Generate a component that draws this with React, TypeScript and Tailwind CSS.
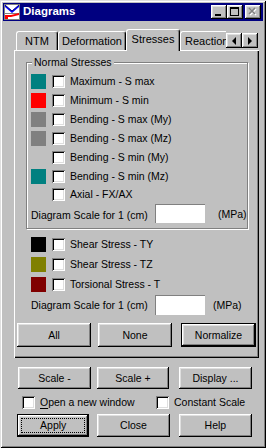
import React from 'react';

const raised =
  'bg-[#c0c0c0] shadow-[inset_-1px_-1px_#000,inset_1px_1px_#fff,inset_-2px_-2px_#808080,inset_2px_2px_#dfdfdf]';
const sunken =
  'bg-white shadow-[inset_1px_1px_#808080,inset_-1px_-1px_#fff,inset_2px_2px_#000,inset_-2px_-2px_#dfdfdf]';

function Check({ className = '' }: { className?: string }) {
  return <div className={`w-[13px] h-[13px] shrink-0 ${sunken} ${className}`} />;
}

interface BtnProps {
  label: React.ReactNode;
  size: string;
  isDefault?: boolean;
  focus?: boolean;
  className?: string;
}

function Btn({ label, size, isDefault, focus, className = '' }: BtnProps) {
  if (isDefault) {
    return (
      <div className={`${size} border border-black flex ${className}`}>
        <div className={`flex-1 flex ${raised}`}>
          {focus ? (
            <div className="flex-1 m-[3px] border border-dotted border-black flex items-center justify-center">
              {label}
            </div>
          ) : (
            <div className="flex-1 flex items-center justify-center">{label}</div>
          )}
        </div>
      </div>
    );
  }
  return (
    <div className={`${size} ${raised} flex items-center justify-center ${className}`}>{label}</div>
  );
}

function StressRow({ color, label, h = 'h-[19px]' }: { color?: string; label: string; h?: string }) {
  return (
    <div className={`flex items-center ${h}`}>
      {color ? <div className={`w-[15px] h-[15px] shrink-0 ${color}`} /> : <div className="w-[15px] shrink-0" />}
      <Check className="ml-[6px]" />
      <span className="ml-[5px] whitespace-nowrap">{label}</span>
    </div>
  );
}

function Tab({ label, size, selected }: { label: string; size: string; selected?: boolean }) {
  return (
    <div
      className={`${size} shrink-0 flex items-center justify-center border-l border-t border-white border-r border-r-black rounded-t-[3px] bg-[#c0c0c0] shadow-[inset_-1px_0_#808080] whitespace-nowrap ${
        selected ? 'relative z-10 -mb-[1px]' : ''
      }`}
    >
      {label}
    </div>
  );
}

function AppIcon() {
  return (
    <svg width="16" height="16" viewBox="0 0 16 16" className="shrink-0">
      <rect x="0" y="0" width="16" height="16" fill="#808080" />
      <rect x="1" y="1" width="14" height="14" fill="#fff" />
      <polygon points="1,1 8,7 15,1 15,3 8,9 1,3" fill="#0000ff" />
      <polyline points="1,1 8,7 15,1" fill="none" stroke="#000080" strokeWidth="1" />
      <rect x="1" y="9" width="14" height="1" fill="#808080" />
      <polygon points="1,15 1,11 7,11 15,9 15,11 7,13 4,13 4,15" fill="#ff0000" />
    </svg>
  );
}

function CaptionBtn({ children, className = '' }: { children: React.ReactNode; className?: string }) {
  return (
    <div className={`w-[16px] h-[14px] ${raised} ${className}`}>
      <svg width="16" height="14" viewBox="0 0 16 14">
        {children}
      </svg>
    </div>
  );
}

export default function App() {
  return (
    <div className="w-[266px] h-[448px] bg-[#c0c0c0] p-[3px] flex flex-col font-['Liberation_Sans',Arial,sans-serif] text-[10.5px] text-black leading-none shadow-[inset_1px_1px_#dfdfdf,inset_-1px_-1px_#000,inset_2px_2px_#fff,inset_-2px_-2px_#808080] select-none">
      {/* Title bar */}
      <div className="h-[18px] bg-[#000080] flex items-center pl-[1px] pr-[2px]">
        <AppIcon />
        <span className="ml-[3px] text-white font-bold text-[11.5px]">Diagrams</span>
        <div className="flex-1" />
        <CaptionBtn>
          <rect x="4" y="9" width="6" height="2" fill="#000" />
        </CaptionBtn>
        <CaptionBtn>
          <rect x="3.5" y="2.5" width="8" height="8" fill="none" stroke="#000" />
          <rect x="3" y="2" width="9" height="2" fill="#000" />
        </CaptionBtn>
        <CaptionBtn className="ml-[2px]">
          <path d="M5 4 L11 10 M11 4 L5 10" stroke="#fff" strokeWidth="1.6" />
          <path d="M4 3 L10 9 M10 3 L4 9" stroke="#808080" strokeWidth="1.6" />
        </CaptionBtn>
      </div>

      {/* Body */}
      <div className="flex flex-col px-[11px] pt-[8px]">
        {/* Tab strip */}
        <div className="h-[21px] flex items-end pl-[2px] text-[11px]">
          <Tab label="NTM" size="w-[42px] h-[19px]" />
          <Tab label="Deformation" size="w-[68px] h-[19px]" />
          <Tab label="Stresses" size="w-[54px] h-[22px] pb-[2px]" selected />
          <div className="w-[46px] h-[19px] overflow-hidden flex shrink-0">
            <Tab label="Reaction" size="w-[60px] h-[19px] justify-start pl-[4px]" />
          </div>
          <div className="self-start mt-[4px] flex">
            <div className={`w-[16px] h-[15px] ${raised} flex items-center justify-center`}>
              <svg width="8" height="8" viewBox="0 0 8 8">
                <polygon points="6,0 6,8 2,4" fill="#000" />
              </svg>
            </div>
            <div className={`w-[16px] h-[15px] ${raised} flex items-center justify-center`}>
              <svg width="8" height="8" viewBox="0 0 8 8">
                <polygon points="2,0 2,8 6,4" fill="#000" />
              </svg>
            </div>
          </div>
        </div>

        {/* Tab panel */}
        <div className="w-[245px] h-[308px] bg-[#c0c0c0] flex flex-col shadow-[inset_1px_1px_#fff,inset_-1px_-1px_#000,inset_-2px_-2px_#808080]">
          {/* Normal stresses group */}
          <div className="relative mt-[12px] ml-[12px] w-[222px] h-[167px] border border-[#808080] shadow-[inset_1px_1px_#fff,1px_1px_#fff] pt-[9px] pl-[4px] flex flex-col">
            <span className="absolute top-[-7px] left-[5px] px-[2px] bg-[#c0c0c0] leading-[13px]">Normal Stresses</span>
            <StressRow color="bg-[#008080]" label="Maximum - S max" />
            <StressRow color="bg-[#ff0000]" label="Minimum - S min" />
            <StressRow color="bg-[#808080]" label="Bending - S max (My)" />
            <StressRow color="bg-[#808080]" label="Bending - S max (Mz)" />
            <StressRow label="Bending - S min (My)" />
            <StressRow color="bg-[#008080]" label="Bending - S min (Mz)" />
            <StressRow label="Axial - FX/AX" h="h-[16px]" />
            <div className="mt-[2px] h-[19px] flex items-center">
              <span className="w-[124px] whitespace-nowrap pt-[3px]">Diagram Scale for 1 (cm)</span>
              <div className="w-[50px] h-[19px] bg-white border-t border-l border-[#808080] border-r-white border-b-white" />
              <span className="ml-[13px] pt-[2px]">(MPa)</span>
            </div>
          </div>

          {/* Shear / torsion */}
          <div className="mt-[5px] ml-[17px] flex flex-col">
            <StressRow color="bg-black" label="Shear Stress - TY" h="h-[20px]" />
            <StressRow color="bg-[#808000]" label="Shear Stress - TZ" h="h-[20px]" />
            <StressRow color="bg-[#800000]" label="Torsional Stress - T" h="h-[20px]" />
            <div className="mt-[1px] h-[20px] flex items-center">
              <span className="w-[124px] whitespace-nowrap pt-[1px]">Diagram Scale for 1 (cm)</span>
              <div className="w-[50px] h-[20px] bg-white border-t border-l border-[#808080] border-r-white border-b-white" />
              <span className="ml-[8px]">(MPa)</span>
            </div>
          </div>

          {/* All / None / Normalize */}
          <div className="mt-[8px] ml-[3px] flex">
            <Btn label="All" size="w-[74px] h-[24px]" />
            <Btn label="None" size="w-[74px] h-[24px]" className="ml-[7px]" />
            <Btn label="Normalize" size="w-[75px] h-[24px]" className="ml-[9px]" isDefault />
          </div>
        </div>

        {/* Scale buttons */}
        <div className="mt-[9px] ml-[4px] flex">
          <Btn label="Scale -" size="w-[75px] h-[22px]" />
          <Btn label="Scale +" size="w-[74px] h-[22px]" className="ml-[6px]" />
          <Btn label="Display ..." size="w-[75px] h-[22px]" className="ml-[10px]" />
        </div>

        {/* Options */}
        <div className="mt-[7px] h-[13px] flex items-center">
          <Check className="ml-[8px]" />
          <span className="ml-[5px] w-[116px] whitespace-nowrap">
            <span className="underline underline-offset-[2px]">O</span>pen a new window
          </span>
          <Check />
          <span className="ml-[5px] whitespace-nowrap">Constant Scale</span>
        </div>

        {/* Dialog buttons */}
        <div className="mt-[5px] ml-[3px] flex">
          <Btn label="Apply" size="w-[74px] h-[23px]" isDefault focus />
          <Btn label="Close" size="w-[74px] h-[23px]" className="ml-[8px]" />
          <Btn label="Help" size="w-[75px] h-[23px]" className="ml-[9px]" />
        </div>
      </div>
    </div>
  );
}
